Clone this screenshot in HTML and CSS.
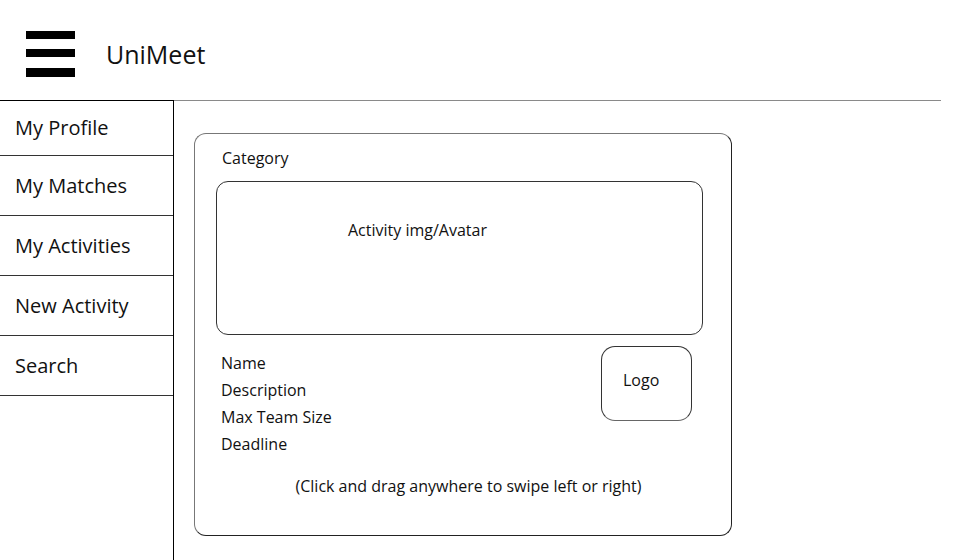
FILE: index.html
```html
<!DOCTYPE html>
<html lang="en">
<head>
  <meta charset="UTF-8" />
  <meta name="viewport" content="width=device-width, initial-scale=1.0" />
  <title>UniMeet</title>
  <link rel="stylesheet" href="styles.css">
</head>
<body>
  <header class="topbar">
    <svg class="burger" width="49" height="46" viewBox="0 0 49 46">
      <rect x="0" y="0" width="49" height="8" fill="#000" />
      <rect x="0" y="18" width="49" height="8" fill="#000" />
      <rect x="0" y="37" width="49" height="9" fill="#000" />
    </svg>
    <div class="brand">UniMeet</div>
  </header>

  <div class="layout">
    <nav class="sidebar">
      <div class="nav-item first">My Profile</div>
      <div class="nav-item">My Matches</div>
      <div class="nav-item">My Activities</div>
      <div class="nav-item">New Activity</div>
      <div class="nav-item">Search</div>
    </nav>

    <main class="content">
      <div class="card">
        <div class="category">Category</div>
        <div class="media">Activity img/Avatar</div>
        <div class="details">
          <div class="fields">
            <div>Name</div>
            <div>Description</div>
            <div>Max Team Size</div>
            <div>Deadline</div>
          </div>
          <div class="logo">Logo</div>
        </div>
        <div class="hint">(Click and drag anywhere to swipe left or right)</div>
      </div>
    </main>
  </div>
</body>
</html>
```

FILE: styles.css
```css
body {
  margin: 0;
  background: #ffffff;
  color: #111111;
  font-family: "Open Sans", "Noto Sans", sans-serif;
  overflow: hidden;
}
.topbar {
  height: 100px;
  box-sizing: border-box;
  padding: 31px 0 0 26px;
  display: flex;
  align-items: flex-start;
}
.burger {
  display: block;
}
.brand {
  margin: 7px 0 0 31px;
  font-size: 25px;
  line-height: 32px;
}
.layout {
  width: 941px;
  height: 460px;
  display: flex;
}
.sidebar {
  width: 174px;
  flex-shrink: 0;
  box-sizing: border-box;
  border-top: 1px solid #000;
  border-right: 1px solid #000;
}
.nav-item {
  height: 59px;
  display: flex;
  align-items: center;
  padding-left: 15px;
  border-bottom: 1px solid #333;
  font-size: 20px;
  line-height: 26px;
}
.nav-item.first {
  height: 54px;
}
.content {
  flex: 1;
  border-top: 1px solid #8a8a8a;
  padding: 32px 0 0 20px;
}
.card {
  width: 538px;
  height: 403px;
  box-sizing: border-box;
  border: 1px solid #222;
  border-top-color: #777;
  border-left-color: #777;
  border-radius: 12px;
  padding: 14px 0 0 21px;
  font-size: 16px;
  line-height: 20px;
}
.category {
  margin-left: 6px;
}
.media {
  width: 487px;
  height: 154px;
  box-sizing: border-box;
  margin-top: 13px;
  border: 1px solid #333;
  border-radius: 12px;
  padding: 38px 0 0 131px;
}
.details {
  width: 487px;
  margin-top: 11px;
  display: flex;
  justify-content: space-between;
  align-items: flex-start;
}
.fields {
  margin-left: 5px;
  padding-top: 4px;
  line-height: 27px;
}
.logo {
  width: 91px;
  height: 75px;
  box-sizing: border-box;
  margin-right: 11px;
  border: 1px solid #333;
  border-bottom-color: #666;
  border-radius: 14px;
  padding: 23px 0 0 21px;
}
.hint {
  width: 487px;
  margin-top: 18px;
  text-align: center;
  padding-left: 18px;
  box-sizing: border-box;
}
```
